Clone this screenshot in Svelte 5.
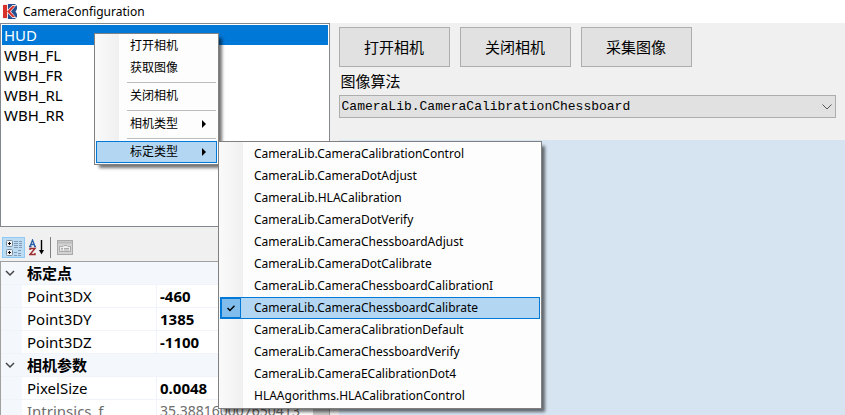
<script>
  const cameras = ['HUD', 'WBH_FL', 'WBH_FR', 'WBH_RL', 'WBH_RR'];
  let camera = $state('HUD');
  let algorithm = $state('CameraLib.CameraCalibrationChessboard');
  const actions = ['打开相机', '关闭相机', '采集图像'];
  const groups = [
    {
      name: '标定点',
      rows: [
        { name: 'Point3DX', value: '-460' },
        { name: 'Point3DY', value: '1385' },
        { name: 'Point3DZ', value: '-1100' }
      ]
    },
    {
      name: '相机参数',
      rows: [
        { name: 'PixelSize', value: '0.0048' },
        { name: 'Intrinsics_f', value: '35.388160007650413', readonly: true }
      ]
    }
  ];
  const menu = [
    { label: '打开相机' },
    { label: '获取图像' },
    { separator: true },
    { label: '关闭相机' },
    { separator: true },
    { label: '相机类型', sub: true },
    { separator: true },
    { label: '标定类型', sub: true, open: true }
  ];
  const types = [
    'CameraLib.CameraCalibrationControl',
    'CameraLib.CameraDotAdjust',
    'CameraLib.HLACalibration',
    'CameraLib.CameraDotVerify',
    'CameraLib.CameraChessboardAdjust',
    'CameraLib.CameraDotCalibrate',
    'CameraLib.CameraChessboardCalibrationI',
    'CameraLib.CameraChessboardCalibrate',
    'CameraLib.CameraCalibrationDefault',
    'CameraLib.CameraChessboardVerify',
    'CameraLib.CameraECalibrationDot4',
    'HLAAgorithms.HLACalibrationControl'
  ];
  let type = $state('CameraLib.CameraChessboardCalibrate');
</script>

<div class="window">
  <header class="title">
    <svg width="14" height="15" viewBox="0 0 14 15" aria-hidden="true">
      <path d="M4 0H12L14 2V5L12.500 7.500L14 10V13L12 15H4Z" fill="#24508f" />
      <path d="M0 0H5V5.500L9.500 1H13.500L8 7.500L13.500 14H9.500L5 9.500V15H0Z" fill="#f3e9ea" />
      <path d="M0 1H4V14H0Z M4 7.500L9.500 2H12L7 7.500L12 13H9.500Z" fill="#d8322a" />
    </svg>
    <span>CameraConfiguration</span>
  </header>

  <div class="body">
    <aside>
      <select class="cameras" size="10" aria-label="Cameras" bind:value={camera}>
        {#each cameras as name}
          <option value={name}>{name}</option>
        {/each}
      </select>

      <div class="toolbar">
        <button class="tool pressed" aria-label="Categorized">
          <svg width="18" height="17" viewBox="0 0 18 17">
            <g fill="#f4f4f4" stroke="#7c8ca0">
              <rect x="1.5" y="1.5" width="6" height="6" rx="1" />
              <rect x="1.5" y="10.5" width="6" height="6" rx="1" />
            </g>
            <path d="M3 4.5H6M4.5 3V6M3 13.5H6M4.5 12V15" stroke="#000" />
            <path d="M9 2.5h4M9 4.5h4M9 6.5h4M9 8.5h4M9 13.5h3M9 16.5h3" stroke="#8599b5" />
            <path d="M14 2.5h3M14 4.5h3M14 6.5h3M14 8.5h3M13 11.5h3M13 14.5h3M13 16.5h3" stroke="#8599b5" />
          </svg>
        </button>
        <button class="tool" aria-label="Alphabetical">
          <svg width="16" height="17" viewBox="0 0 16 17" fill="none">
            <path d="M1 7.5L3.5 1L6 7.5M2 5.5H5M0 7.5H2.5M5 7.5H7" stroke="#2860a8" stroke-width="1.3" />
            <path d="M1 11V9.5H6L1 15.5H6V14" stroke="#a02c2c" stroke-width="1.4" />
            <path d="M12.500 1V13" stroke="#000" stroke-width="1.400" />
            <path d="M10 11H15L12.500 15.500Z" fill="#000" />
          </svg>
        </button>
        <span class="divider"></span>
        <button class="tool" aria-label="Property pages" disabled>
          <svg width="16" height="15" viewBox="0 0 16 15" fill="none" stroke="#aaa">
            <rect x=".5" y=".5" width="15" height="14" fill="#d2d2d2" />
            <path d="M1 2.500H15" stroke="#bbb" stroke-width="2" />
            <path d="M2.500 11.500V6.500H6L7 5.500H10L11 6.500H13.500V11.500Z" fill="#eee" />
            <path d="M4 8.500H6M7 8.500H12M4 10H6M7 10H12" />
          </svg>
        </button>
      </div>

      <div class="grid">
        <table>
          <colgroup>
            <col class="c-gutter" />
            <col class="c-name" />
            <col />
          </colgroup>
          {#each groups as group}
            <tbody>
              <tr class="group">
                <td class="gutter">
                  <svg width="10" height="7" viewBox="0 0 10 7"><path d="M1 1L5 5L9 1" fill="none" stroke="#444" stroke-width="1.500" /></svg>
                </td>
                <th colspan="2" scope="rowgroup">{group.name}</th>
              </tr>
              {#each group.rows as row}
                <tr class:readonly={row.readonly}>
                  <td class="gutter"></td>
                  <th scope="row">{row.name}</th>
                  <td class="value">{row.value}</td>
                </tr>
              {/each}
            </tbody>
          {/each}
        </table>
        <div class="scrollbar"><div class="thumb"></div></div>
      </div>
    </aside>

    <main>
      <div class="actions">
        {#each actions as action}
          <button>{action}</button>
        {/each}
      </div>
      <label for="algorithm">图像算法</label>
      <div class="combo">
        <select id="algorithm" bind:value={algorithm}>
          <option>CameraLib.CameraCalibrationChessboard</option>
        </select>
        <svg width="10" height="6" viewBox="0 0 10 6" aria-hidden="true"><path d="M.5 .5L5 5L9.500 .5" fill="none" stroke="#555" /></svg>
      </div>
      <div class="view"></div>
    </main>
  </div>

  <div class="menu context" role="menu">
    {#each menu as item}
      {#if item.separator}
        <div class="separator" role="separator"></div>
      {:else}
        <button class="item" class:active={item.open} role="menuitem">
          <span class="text">{item.label}</span>
          {#if item.sub}
            <svg width="4" height="8" viewBox="0 0 4 8" aria-hidden="true"><path d="M0 0L4 4L0 8Z" /></svg>
          {/if}
        </button>
      {/if}
    {/each}
  </div>

  <div class="menu submenu" role="menu">
    {#each types as name}
      <button
        class="item"
        class:active={name === type}
        role="menuitemradio"
        aria-checked={name === type}
        onclick={() => (type = name)}
      >
        <span class="check">
          {#if name === type}
            <svg width="8" height="7" viewBox="0 0 8 7"><path d="M.5 3L3 5.500L7.500 .8" fill="none" stroke="#000" stroke-width="1.500" /></svg>
          {/if}
        </span>
        <span class="text">{name}</span>
      </button>
    {/each}
  </div>
</div>

<style>
  .window {
    position: relative;
    display: flex;
    flex-direction: column;
    height: 100vh;
    overflow: hidden;
    background: #f0f0f0;
    color: #000;
    font-family: 'Noto Sans', 'Noto Sans CJK SC', sans-serif;
    font-size: 12px;
  }
  .window * {
    box-sizing: border-box;
  }
  button,
  select {
    margin: 0;
    border-radius: 0;
    color: inherit;
    font-family: inherit;
    outline: none;
  }
  svg {
    display: block;
    flex: none;
  }
  .title {
    display: flex;
    align-items: center;
    gap: 6px;
    height: 23px;
    flex: none;
    padding-left: 3px;
    background: #fff;
    font-size: 12px;
  }
  .body {
    display: flex;
    flex: 1;
    min-height: 0;
  }
  aside {
    display: flex;
    flex-direction: column;
    width: 39%;
  }
  .cameras {
    appearance: none;
    height: 204px;
    flex: none;
    padding: 1px;
    border: 1px solid #828790;
    background: #fff;
    font-size: 15px;
    overflow: hidden;
  }
  .cameras option {
    height: 20px;
    min-height: 20px;
    padding: 0 2px;
    line-height: 20px;
  }
  .cameras option:checked {
    background: linear-gradient(#0078d7, #0078d7);
    color: #fff;
    -webkit-text-fill-color: #fff;
  }
  .toolbar {
    display: flex;
    align-items: center;
    height: 34px;
    flex: none;
    padding: 7px 2px 0;
  }
  .tool {
    display: grid;
    place-items: center;
    width: 23px;
    height: 21px;
    padding: 0;
    border: 0;
    background: none;
  }
  .tool.pressed {
    border: 1px solid #90c8f6;
    background: #bcdcf4;
  }
  .divider {
    width: 1px;
    height: 21px;
    margin: 0 2px;
    background: #808080;
  }
  .grid {
    display: flex;
    flex: 1;
    min-height: 0;
    overflow: hidden;
    border: 1px solid #a0a0a0;
    border-bottom: 0;
    background: #fff;
  }
  table {
    flex: 1;
    border-spacing: 0;
    table-layout: fixed;
    width: 0;
    font-size: 15px;
    line-height: 22px;
  }
  .c-gutter {
    width: 21px;
  }
  .c-name {
    width: 135px;
  }
  tr {
    height: 23px;
  }
  th,
  td {
    padding: 0 0 0 3px;
    border-bottom: 1px solid #f0f4fa;
    text-align: left;
    font-weight: 400;
    white-space: nowrap;
  }
  th {
    padding-left: 5px;
    border-right: 1px solid #f0f4fa;
  }
  .gutter {
    padding-left: 4px;
  }
  .gutter,
  .group th {
    background: #f4f7fc;
  }
  .group th,
  .value {
    font-weight: 700;
  }
  .readonly,
  .readonly .value {
    color: #6d6d6d;
    font-weight: 400;
  }
  .readonly .value {
    font-size: 14px;
  }
  .scrollbar {
    width: 16px;
    padding-top: 17px;
    background: #f0f0f0;
  }
  .thumb {
    height: 100%;
    background: #cdcdcd;
  }
  main {
    display: flex;
    flex-direction: column;
    flex: 1;
    min-width: 0;
    padding: 4px 0 0 9px;
  }
  .actions {
    display: flex;
    gap: 10px;
  }
  .actions button {
    width: 111px;
    height: 40px;
    padding: 0 0 2px;
    border: 1px solid #adadad;
    background: #e1e1e1;
    font-size: 15px;
  }
  label {
    padding: 2px;
    font-size: 15px;
    line-height: 24px;
  }
  .combo {
    display: grid;
    align-items: center;
    margin: 0 9px 22px 0;
  }
  .combo select,
  .combo svg {
    grid-area: 1 / 1;
  }
  .combo svg {
    justify-self: end;
    margin-right: 4px;
    pointer-events: none;
  }
  .combo select {
    appearance: none;
    width: 100%;
    height: 23px;
    padding: 0 2px;
    border: 1px solid #adadad;
    background: #e1e1e1;
    font-family: 'Liberation Mono', monospace;
    font-size: 13px;
  }
  .view {
    flex: 1;
    background: #d6e4f2;
  }
  .menu {
    position: absolute;
    display: flex;
    flex-direction: column;
    padding: 1px;
    border: 1px solid #808080;
    box-shadow: 4px 4px 3px -1px rgba(0, 0, 0, 0.55);
    font-size: 12px;
  }
  .context {
    left: 94px;
    top: 33px;
    width: 125px;
    background: linear-gradient(90deg, #fafafa, #f0f0f0 24px, #fdfdfd 24px);
  }
  .submenu {
    left: 218px;
    top: 141px;
    width: 324px;
    background: linear-gradient(90deg, #fafafa, #f0f0f0 24px, #fdfdfd 24px);
  }
  .item {
    display: flex;
    align-items: center;
    height: 22px;
    padding: 0;
    border: 1px solid transparent;
    background: none;
    font-size: 12px;
    text-align: left;
    white-space: nowrap;
  }
  .item .text {
    padding-bottom: 2px;
  }
  .item.active {
    border-color: #0078d7;
    background: #b3d7f3;
  }
  .context .item {
    justify-content: space-between;
    padding: 0 10px 0 33px;
  }
  .separator {
    height: 6px;
    padding-top: 3px;
    margin: 0 1px 0 31px;
  }
  .separator::before {
    content: '';
    display: block;
    height: 1px;
    background: #bdbdbd;
  }
  .check {
    display: grid;
    place-items: center;
    width: 20px;
    height: 20px;
    margin-right: 13px;
  }
  .active .check {
    border: 1px solid #0078d7;
    background: #80bcec;
  }
</style>
